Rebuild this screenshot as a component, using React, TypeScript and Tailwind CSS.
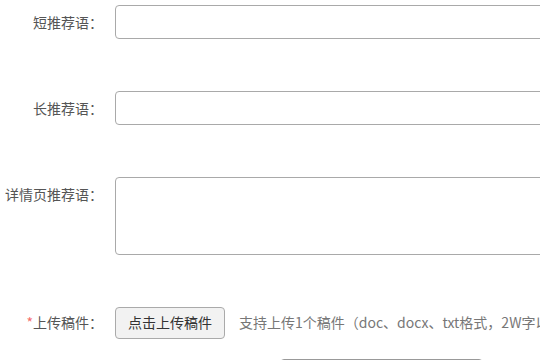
export default function App() {
    return (
        <div className="h-[360px] w-[540px] overflow-hidden bg-white pt-[5px] text-[14px] text-[#555] [font-family:'Noto_Sans_CJK_SC','Liberation_Sans',sans-serif]">

            {/* 短推荐语 */}
            <div className="flex items-center">
                <label className="w-[103px] shrink-0 text-right leading-[34px]">短推荐语：</label>
                <input className="ml-[12px] h-[34px] w-[500px] shrink-0 rounded-[4px] border border-[#a9a9a9] px-2 outline-none" />
            </div>

            {/* 长推荐语 */}
            <div className="mt-[52px] flex items-center">
                <label className="w-[103px] shrink-0 text-right leading-[34px]">长推荐语：</label>
                <input className="ml-[12px] h-[34px] w-[500px] shrink-0 rounded-[4px] border border-[#a9a9a9] px-2 outline-none" />
            </div>

            {/* 详情页推荐语 */}
            <div className="mt-[52px] flex items-start">
                <label className="w-[103px] shrink-0 text-right leading-[34px]">详情页推荐语：</label>
                <textarea className="ml-[12px] h-[78px] w-[500px] shrink-0 resize-none rounded-[4px] border border-[#a9a9a9] px-2 outline-none" />
            </div>

            {/* 上传稿件 */}
            <div className="mt-[51px] flex h-[33px] items-center">
                <label className="w-[103px] shrink-0 text-right">
                    <span className="text-[#f56c6c]">*</span>上传稿件：
                </label>
                <button className="ml-[12px] h-[32px] w-[110px] shrink-0 rounded-[4px] border border-[#aaa] bg-[#f2f2f2] text-[#333]">
                    点击上传稿件
                </button>
                <span className="ml-[14px] shrink-0 whitespace-nowrap text-[#777]">
                    支持上传1个稿件（doc、docx、txt格式，2W字以内）
                </span>
            </div>

            <div className="ml-[280px] mt-[20px] h-[34px] w-[203px] rounded-[4px] border border-[#999]" />

        </div>
    )
}
